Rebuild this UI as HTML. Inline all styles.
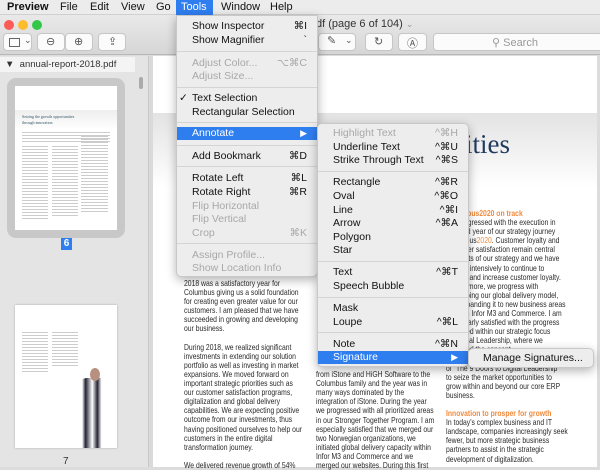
<!DOCTYPE html>
<html><head><meta charset="utf-8"><style>
*{margin:0;padding:0;box-sizing:border-box}
body{width:600px;height:467px;overflow:hidden;position:relative;background:#dcdcdc;font-family:"Liberation Sans",sans-serif}
.a{position:absolute}
.mb{left:0;top:0;width:600px;height:15px;background:#ececec;border-bottom:1px solid #d0d0d0;font-size:11px;color:#111}
.mb span{position:absolute;top:1px}
.title{left:0;top:15px;width:600px;height:40px;background:linear-gradient(#e9e9e9,#d6d6d6);border-bottom:1px solid #b8b8b8}
.btn{position:absolute;height:18px;top:33px;background:#fbfbfb;border:1px solid #c6c6c6;border-radius:4px}
.side{left:0;top:56px;width:148px;height:411px;background:#e4e4e4}
.doc{left:153px;top:56px;width:444px;height:411px;background:#fff}
.menu{position:absolute;background:#ededed;border:1px solid #c8c8c8;border-radius:0 0 5px 5px;box-shadow:0 3px 10px rgba(0,0,0,.3);font-size:10.5px;color:#111}
.mi{position:absolute;left:0;right:0;height:14px;line-height:14px;padding-left:15px;white-space:nowrap}
.mi .k{position:absolute;right:10px;top:0}
.dis{color:#a8a8a8}
.hl{background:#2f7ef0;color:#fff}
.sep{position:absolute;left:0;right:0;height:1px;background:#d4d4d4}
.t{position:absolute;font-size:8.3px;color:#2a2a2a;white-space:nowrap;line-height:9.1px;transform:scaleX(0.82);transform-origin:0 0}
.or{color:#f08a3c;font-weight:bold}
</style></head><body>
<div class="a mb">
<span style="left:7px;font-weight:bold">Preview</span>
<span style="left:60px">File</span><span style="left:90px">Edit</span><span style="left:121px">View</span><span style="left:156px">Go</span>
<span style="left:176px;top:0;width:37px;height:15px;background:#2f7ef0;color:#fff;padding:1px 5px">Tools</span>
<span style="left:221px">Window</span><span style="left:270px">Help</span>
</div>
<div class="a title"></div>
<div class="a" style="left:4px;top:20px;width:10px;height:10px;border-radius:50%;background:#fc5b57"></div>
<div class="a" style="left:18px;top:20px;width:10px;height:10px;border-radius:50%;background:#fdbc2e"></div>
<div class="a" style="left:32px;top:20px;width:10px;height:10px;border-radius:50%;background:#33c748"></div>
<div class="btn" style="left:3px;width:29px"><div class="a" style="left:5px;top:4px;width:11px;height:9px;border:1px solid #666"></div><span class="a" style="left:20px;top:1px;font-size:9px;color:#555">⌄</span></div>
<div class="btn" style="left:37px;width:28px"><span class="a" style="left:8px;top:1px;font-size:11px;color:#555">⊖</span></div>
<div class="btn" style="left:65px;width:28px"><span class="a" style="left:8px;top:1px;font-size:11px;color:#555">⊕</span></div>
<div class="btn" style="left:98px;width:28px"><span class="a" style="left:9px;top:1px;font-size:11px;color:#555">⇪</span></div>
<div class="a" style="left:316px;top:18px;font-size:11px;color:#333">df (page 6 of 104) <span style="color:#999;font-size:9px">⌄</span></div>
<div class="btn" style="left:318px;width:38px"><span class="a" style="left:8px;top:0;font-size:11px;color:#555">✎</span><span class="a" style="left:26px;top:1px;font-size:9px;color:#555">⌄</span></div>
<div class="btn" style="left:365px;width:28px"><span class="a" style="left:8px;top:1px;font-size:11px;color:#555">↻</span></div>
<div class="btn" style="left:398px;width:29px"><span class="a" style="left:8px;top:1px;font-size:11px;color:#555">Ⓐ</span></div>
<div class="btn" style="left:433px;width:170px"><span class="a" style="left:58px;top:2px;font-size:11px;color:#999">⚲ Search</span></div>

<div class="a side"></div>
<div class="a" style="left:0;top:57px;width:135px;height:15px;background:#f4f4f4;font-size:9.5px;color:#333;padding:2px 0 0 5px">▼&nbsp; annual-report-2018.pdf</div>
<div class="a" style="left:139px;top:77px;width:4px;height:12px;border-radius:2px;background:#aaa"></div>
<div class="a" style="left:148px;top:56px;width:5px;height:411px;background:#dadada;border-left:1px solid #c8c8c8"></div>
<div class="a" style="left:7px;top:78px;width:118px;height:160px;background:#c8c8c8;border-radius:9px"></div>
<div class="a" style="left:15px;top:86px;width:102px;height:144px;background:#fff"></div>
<div class="a" style="left:15px;top:110px;width:102px;height:20px;background:linear-gradient(#eee,#fff)"></div>
<div class="a" style="left:22px;top:114px;font-size:4px;color:#356;line-height:6px;font-family:'Liberation Serif',serif">Seizing the growth opportunities<br>through innovation</div>
<div class="a" style="left:22px;top:132px;width:88px;height:10px;background:repeating-linear-gradient(#ccc 0 1px,transparent 1px 3px)"></div>
<div class="a" style="left:22px;top:146px;width:26px;height:74px;background:repeating-linear-gradient(#ccc 0 1px,transparent 1px 3px)"></div>
<div class="a" style="left:52px;top:146px;width:26px;height:72px;background:repeating-linear-gradient(#ccc 0 1px,transparent 1px 3px)"></div>
<div class="a" style="left:81px;top:136px;width:27px;height:78px;background:repeating-linear-gradient(#ccc 0 1px,transparent 1px 3px)"></div>
<div class="a" style="left:61px;top:238px;width:11px;height:12px;background:#2f7ef0;color:#fff;font-size:10px;font-weight:bold;text-align:center;line-height:12px">6</div>
<div class="a" style="left:15px;top:305px;width:102px;height:143px;background:#fff;box-shadow:0 0 2px #aaa"></div>
<div class="a" style="left:22px;top:332px;width:26px;height:40px;background:repeating-linear-gradient(#ccc 0 1px,transparent 1px 3px)"></div>
<div class="a" style="left:52px;top:332px;width:26px;height:36px;background:repeating-linear-gradient(#ccc 0 1px,transparent 1px 3px)"></div>
<div class="a" style="left:77px;top:378px;width:34px;height:70px;background:linear-gradient(90deg,transparent 15%,#223 25%,#fff 45%,#223 60%,transparent 72%);border-radius:10px 10px 0 0"></div>
<div class="a" style="left:90px;top:368px;width:10px;height:13px;border-radius:50%;background:#b89080"></div>
<div class="a" style="left:63px;top:456px;font-size:10px;color:#333">7</div>

<div class="a doc"></div>
<div class="a" style="left:153px;top:113px;width:444px;height:75px;background:linear-gradient(#e3e3e3,#fff)"></div>
<div class="a" style="right:90px;top:129px;font-family:'Liberation Serif',serif;font-size:27px;color:#1f3a5f;white-space:nowrap">opportunities</div>

<div class="t" style="left:184px;top:279px">2018 was a satisfactory year for<br>Columbus giving us a solid foundation<br>for creating even greater value for our<br>customers. I am pleased that we have<br>succeeded in growing and developing<br>our business.<br><br>During 2018, we realized significant<br>investments in extending our solution<br>portfolio as well as investing in market<br>expansions. We moved forward on<br>important strategic priorities such as<br>our customer satisfaction programs,<br>digitalization and global delivery<br>capabilities. We are expecting positive<br>outcome from our investments, thus<br>having positioned ourselves to help our<br>customers in the entire digital<br>transformation journey.<br><br>We delivered revenue growth of 54%</div>
<div class="t" style="left:316px;top:361px">&nbsp;<br>from iStone and HiGH Software to the<br>Columbus family and the year was in<br>many ways dominated by the<br>integration of iStone. During the year<br>we progressed with all prioritized areas<br>in our Stronger Together Program. I am<br>especially satisfied that we merged our<br>two Norwegian organizations, we<br>initiated global delivery capacity within<br>Infor M3 and Commerce and we<br>merged our websites. During this first</div>
<div class="t" style="left:446px;top:209px"><span class="or">Columbus2020 on track</span><br>We progressed with the execution in<br>the third year of our strategy journey<br>Columbus<span style="color:#f08a3c">2020</span>. Customer loyalty and<br>customer satisfaction remain central<br>elements of our strategy and we have<br>worked intensively to continue to<br>sustain and increase customer loyalty.<br>Furthermore, we progress with<br>developing our global delivery model,<br>and expanding it to new business areas<br>such as Infor M3 and Commerce. I am<br>particularly satisfied with the progress<br>delivered within our strategic focus<br>on Digital Leadership, where we<br>launched the concept<br>and the methodology<br>of "The 9 Doors to Digital Leadership"<br>to seize the market opportunities to<br>grow within and beyond our core ERP<br>business.<br><br><span class="or">Innovation to prosper for growth</span><br>In today's complex business and IT<br>landscape, companies increasingly seek<br>fewer, but more strategic business<br>partners to assist in the strategic<br>development of digitalization.</div>

<div class="menu" style="left:176px;top:15px;width:142px;height:262px">
<div class="mi" style="top:3px">Show Inspector<span class="k">⌘I</span></div>
<div class="mi" style="top:17px">Show Magnifier<span class="k">`</span></div>
<div class="sep" style="top:35px"></div>
<div class="mi dis" style="top:40px">Adjust Color...<span class="k">⌥⌘C</span></div>
<div class="mi dis" style="top:53px">Adjust Size...</div>
<div class="sep" style="top:71px"></div>
<div class="mi" style="top:75px"><span class="a" style="left:2px">✓</span>Text Selection</div>
<div class="mi" style="top:89px">Rectangular Selection</div>
<div class="sep" style="top:106px"></div>
<div class="mi hl" style="top:111px;height:13px;line-height:13px">Annotate<span class="k" style="font-size:9px">▶</span></div>
<div class="sep" style="top:129px"></div>
<div class="mi" style="top:133px">Add Bookmark<span class="k">⌘D</span></div>
<div class="sep" style="top:150px"></div>
<div class="mi" style="top:155px">Rotate Left<span class="k">⌘L</span></div>
<div class="mi" style="top:169px">Rotate Right<span class="k">⌘R</span></div>
<div class="mi dis" style="top:183px">Flip Horizontal</div>
<div class="mi dis" style="top:196px">Flip Vertical</div>
<div class="mi dis" style="top:210px">Crop<span class="k">⌘K</span></div>
<div class="sep" style="top:227px"></div>
<div class="mi dis" style="top:232px">Assign Profile...</div>
<div class="mi dis" style="top:245px">Show Location Info</div>
</div>

<div class="menu" style="left:317px;top:123px;width:152px;height:244px;border-radius:5px">
<div class="mi dis" style="top:2px">Highlight Text<span class="k">^⌘H</span></div>
<div class="mi" style="top:16px">Underline Text<span class="k">^⌘U</span></div>
<div class="mi" style="top:29px">Strike Through Text<span class="k">^⌘S</span></div>
<div class="sep" style="top:47px"></div>
<div class="mi" style="top:51px">Rectangle<span class="k">^⌘R</span></div>
<div class="mi" style="top:65px">Oval<span class="k">^⌘O</span></div>
<div class="mi" style="top:79px">Line<span class="k">^⌘I</span></div>
<div class="mi" style="top:92px">Arrow<span class="k">^⌘A</span></div>
<div class="mi" style="top:106px">Polygon</div>
<div class="mi" style="top:119px">Star</div>
<div class="sep" style="top:137px"></div>
<div class="mi" style="top:141px">Text<span class="k">^⌘T</span></div>
<div class="mi" style="top:155px">Speech Bubble</div>
<div class="sep" style="top:173px"></div>
<div class="mi" style="top:177px">Mask</div>
<div class="mi" style="top:191px">Loupe<span class="k">^⌘L</span></div>
<div class="sep" style="top:208px"></div>
<div class="mi" style="top:213px">Note<span class="k">^⌘N</span></div>
<div class="mi hl" style="top:227px;height:13px;line-height:13px">Signature<span class="k" style="font-size:9px">▶</span></div>
</div>

<div class="menu" style="left:468px;top:348px;width:126px;height:20px;border-radius:5px">
<div class="mi" style="top:2px;padding-left:14px">Manage Signatures...</div>
</div>
</body></html>
